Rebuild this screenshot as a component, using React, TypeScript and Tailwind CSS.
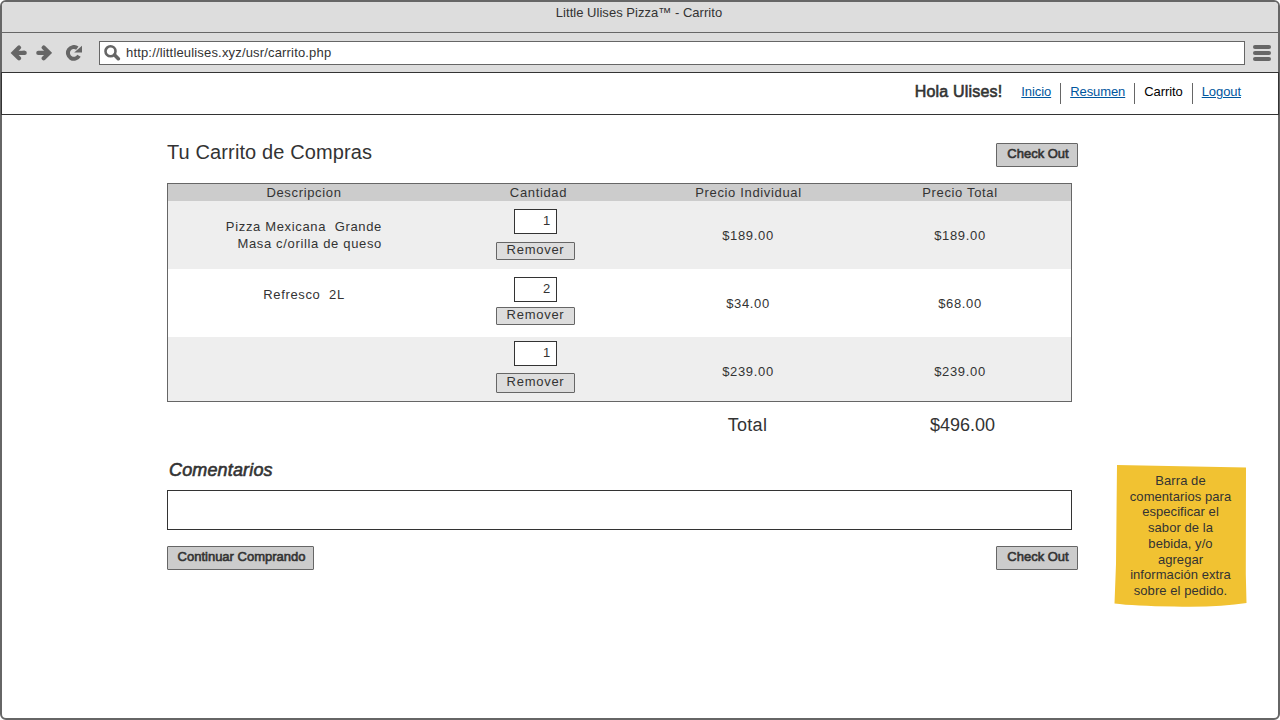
import React from "react";

const faux = "[-webkit-text-stroke:0.6px_#333]";

function NavDivider() {
  return <span className="h-[21px] w-px bg-[#666]" />;
}

function ActionButton({ label, className }: { label: string; className: string }) {
  return (
    <button
      className={`h-6 rounded-[1px] border border-[#666] bg-[#ccc] pb-[3px] pl-[2px] text-[13px] leading-[19px] whitespace-nowrap [-webkit-text-stroke:0.6px_#333] ${className}`}
    >
      {label}
    </button>
  );
}

type Item = {
  lines: string[];
  qty: string;
  unit: string;
  total: string;
  row: string;
  desc: string;
  qtyPad: string;
  remove: string;
};

const items: Item[] = [
  {
    lines: ["Pizza Mexicana  Grande", "Masa c/orilla de queso"],
    qty: "1",
    unit: "$189.00",
    total: "$189.00",
    row: "h-[68px] bg-[#eee]",
    desc: "pt-[17px] pr-[58px] text-right",
    qtyPad: "pt-2",
    remove: "mt-2 h-[18px] leading-[14px] pb-[2px]",
  },
  {
    lines: ["Refresco  2L"],
    qty: "2",
    unit: "$34.00",
    total: "$68.00",
    row: "h-[68px] bg-white",
    desc: "pt-[17px] text-center",
    qtyPad: "pt-2",
    remove: "mt-[5px] h-[18px] leading-[14px] pb-[2px]",
  },
  {
    lines: [],
    qty: "1",
    unit: "$239.00",
    total: "$239.00",
    row: "h-[64px] bg-[#eee]",
    desc: "",
    qtyPad: "pt-1",
    remove: "mt-[7px] h-5 leading-4 pb-[2px]",
  },
];

const cols = "grid grid-cols-[272px_197px_223px_211px]";

export default function App() {
  return (
    <div className="flex h-[720px] w-[1280px] flex-col rounded-[6px] border-2 border-[#666] bg-white font-['Liberation_Sans',Arial,sans-serif] text-[13px] text-[#333]">
      <div className="h-[31px] shrink-0 rounded-t-[4px] border-b border-[#666] bg-[#ddd] pt-[2px] pr-[2px] text-center leading-[17px] tracking-[0.03px]">
        Little Ulises Pizza™ - Carrito
      </div>
      <div className="flex h-[39px] shrink-0 items-center bg-[#ddd] pl-2">
        <svg className="h-4 w-[17px] shrink-0" viewBox="0 0 17 16" fill="none" stroke="#666" strokeWidth="4.2" strokeLinecap="round" strokeLinejoin="miter">
          <path d="M9 2.600 3.600 7.900 9 13.200" />
          <path d="M4.500 7.900H15" strokeLinecap="butt" />
          <path d="M13 7.900h1.700" />
        </svg>
        <svg className="ml-2 h-4 w-[17px] shrink-0" viewBox="0 0 17 16" fill="none" stroke="#666" strokeWidth="4.2" strokeLinecap="round" strokeLinejoin="miter">
          <path d="M8.700 2.600 14.100 7.900 8.700 13.200" />
          <path d="M12.500 7.900H3.300" />
        </svg>
        <svg className="ml-[13px] h-4 w-[18px] shrink-0" viewBox="0 0 18 16" fill="none">
          <path d="M12.300 3.100A5.900 5.900 0 1 0 14 10.800" stroke="#666" strokeWidth="4" />
          <path d="M17 .8v6.600H9.200Z" fill="#666" />
        </svg>
        <div className="ml-4 flex h-6 w-[1146px] shrink-0 items-center border border-[#666] bg-white pl-1">
          <svg className="h-4 w-[17px]" viewBox="0 0 17 16" fill="none" stroke="#666">
            <circle cx="6.500" cy="6.300" r="5" strokeWidth="2.600" />
            <path d="m10.600 10 3.700 3.700" strokeWidth="3.600" strokeLinecap="round" />
          </svg>
          <span className="ml-[5px] tracking-[0.17px]">http://littleulises.xyz/usr/carrito.php</span>
        </div>
        <div className="ml-2 flex w-[18px] flex-col gap-[2px]">
          <span className="h-1 rounded-[2px] bg-[#666]" />
          <span className="h-1 rounded-[2px] bg-[#666]" />
          <span className="h-1 rounded-[2px] bg-[#666]" />
        </div>
      </div>
      <header className="-mx-px flex h-[43px] shrink-0 items-start justify-end border border-[#333] bg-white pt-[10px] pr-[37px] leading-[17px]">
        <span className={`mr-[19px] text-base leading-[17px] tracking-[0.18px] ${faux}`}>Hola Ulises!</span>
        <nav className="flex gap-[9px] tracking-[-0.08px] text-[#00569e]">
          <a className="underline" href="#inicio">Inicio</a>
          <NavDivider />
          <a className="underline" href="#resumen">Resumen</a>
          <NavDivider />
          <span className="text-black">Carrito</span>
          <NavDivider />
          <a className="underline" href="#logout">Logout</a>
        </nav>
      </header>
      <div className="flex">
        <main className="ml-[165px] w-[911px] pt-7">
          <div className="flex h-10 items-start justify-between">
            <h1 className="text-xl leading-[19px] tracking-[0.12px]">Tu Carrito de Compras</h1>
            <ActionButton label="Check Out" className="w-[82px]" />
          </div>
          <section className="w-[905px] border border-[#666] tracking-[0.66px]">
            <div className={`${cols} h-[17px] bg-[#ccc] text-center leading-[17px]`}>
              <span>Descripcion</span>
              <span>Cantidad</span>
              <span>Precio Individual</span>
              <span className="pr-[11px]">Precio Total</span>
            </div>
            {items.map((it, i) => (
              <div key={i} className={`${cols} ${it.row}`}>
                <div className={`leading-[17px] whitespace-pre ${it.desc}`}>
                  {it.lines.map((l) => (
                    <p key={l}>{l}</p>
                  ))}
                </div>
                <div className={`flex flex-col items-center pr-[6px] ${it.qtyPad}`}>
                  <div className="h-[25px] w-[43px] shrink-0 border border-[#333] bg-white pr-[5px] text-right leading-[21px]">
                    {it.qty}
                  </div>
                  <button
                    className={`w-[79px] shrink-0 rounded-[1px] border border-[#666] bg-[#ddd] tracking-[0.72px] ${it.remove}`}
                  >
                    Remover
                  </button>
                </div>
                <span className="pr-px text-center leading-[70px]">{it.unit}</span>
                <span className="pr-[11px] text-center leading-[70px]">{it.total}</span>
              </div>
            ))}
          </section>
          <div className={`${cols} mt-3 text-center text-lg leading-[22px]`}>
            <span className="col-start-3 tracking-[0.25px]">Total</span>
            <span className="pr-[4px]">$496.00</span>
          </div>
          <h2 className={`mt-[23px] ml-[2px] text-lg leading-[22px] tracking-[0.15px] italic ${faux}`}>Comentarios</h2>
          <div className="mt-[9px] h-10 w-[905px] border border-[#333] bg-white" />
          <div className="mt-4 flex justify-between">
            <ActionButton label="Continuar Comprando" className="w-[147px]" />
            <ActionButton label="Check Out" className="w-[82px]" />
          </div>
        </main>
        <aside className="mt-[349px] ml-9 grid h-[144px] w-[134px]">
          <svg className="col-start-1 row-start-1 h-[144px] w-[134px]" viewBox="0 0 134 144" fill="#f1c232">
            <path d="M3 1 132 3.500 131.800 110 132.500 139Q105 143.500 60 142.500 20 142 .5 139.500L2 100Z" />
          </svg>
          <p className="col-start-1 row-start-1 pt-[9px] pr-px text-center leading-[15.7px] tracking-[0.06px]">
            Barra de<br />comentarios para<br />especificar el<br />sabor de la<br />bebida, y/o<br />agregar<br />
            información extra<br />sobre el pedido.
          </p>
        </aside>
      </div>
    </div>
  );
}
